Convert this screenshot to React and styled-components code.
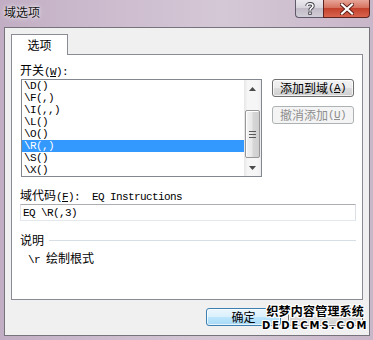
import React from "react";
import styled, { createGlobalStyle } from "styled-components";

const CJK = `"Noto Sans CJK SC", "Noto Sans", sans-serif`;
const MONO = `"Liberation Mono", "Noto Sans CJK SC", monospace`;

const Global = createGlobalStyle`
  html, body { margin: 0; padding: 0; background: #c9b8ca; }
  * { box-sizing: border-box; }
`;

const Frame = styled.div`
  position: relative;
  width: 373px;
  height: 340px;
  background: linear-gradient(90deg, #c2aec4 0%, #cbbacd 25%, #d5c8d6 60%, #cdbdce 85%, #c8b6c9 100%);
  display: flex;
  flex-direction: column;
  font-family: ${CJK};
  font-size: 12px;
  color: #000;
  overflow: hidden;
`;

const TitleBar = styled.div`
  height: 27px;
  display: flex;
  align-items: flex-start;
  padding: 0 3px 0 4px;
`;

const Title = styled.div`
  margin-top: 4px;
  font-size: 12px;
  line-height: 16px;
  color: #111;
  text-shadow: 0 0 5px rgba(255, 255, 255, 0.9), 0 0 2px rgba(255, 255, 255, 0.8);
`;

const Caption = styled.div`
  margin-left: auto;
  display: flex;
`;

const HelpBtn = styled.div`
  width: 28px;
  height: 18px;
  border: 1px solid #5f5868;
  border-top: none;
  border-right: none;
  border-radius: 0 0 0 4px;
  background: linear-gradient(#ece9ef, #d9d5dd 45%, #c0bbc6 50%, #d2ced7);
  display: flex;
  align-items: center;
  justify-content: center;
`;

const CloseBtn = styled.div`
  width: 47px;
  height: 18px;
  border: 1px solid #5e2520;
  border-top: none;
  border-radius: 0 0 4px 0;
  background: linear-gradient(#e6a598, #d77260 45%, #c4412d 50%, #d8654f);
  display: flex;
  align-items: center;
  justify-content: center;
`;

const Client = styled.div`
  margin: 0 3px 0 4px;
  height: 309px;
  background: #f0f0f0;
  border: 1px solid #77737c;
  padding: 6px 6px 0 6px;
  display: flex;
  flex-direction: column;
`;

const TabStrip = styled.div`
  display: flex;
  position: relative;
  z-index: 1;
  margin-bottom: -1px;
`;

const Tab = styled.div`
  width: 57px;
  height: 21px;
  background: #fff;
  border: 1px solid #898c95;
  border-bottom: none;
  display: flex;
  align-items: center;
  justify-content: center;
  padding-bottom: 2px;
`;

const Panel = styled.div`
  height: 246px;
  background: #fff;
  border: 1px solid #898c95;
  padding: 8px 6px 0 8px;
  display: flex;
  flex-direction: column;
`;

const Label = styled.div`
  line-height: 14px;
  height: 14px;
  white-space: pre;
  margin-top: ${(p) => p.$mt || 0}px;
  padding-left: ${(p) => p.$indent || 0}px;
`;

const Mono = styled.span`
  font-family: ${MONO};
  font-size: 11px;
  letter-spacing: -0.6px;
`;

const Row = styled.div`
  display: flex;
  margin-top: 2px;
  gap: 10px;
`;

const ListBox = styled.div`
  margin-left: 1px;
  width: 241px;
  height: 98px;
  border: 1px solid #828790;
  display: flex;
  background: #fff;
`;

const Items = styled.div`
  flex: 1;
  display: flex;
  flex-direction: column;
`;

const Item = styled.div`
  height: 12px;
  line-height: 12px;
  padding-left: 2px;
  font-family: ${MONO};
  font-size: 11px;
  letter-spacing: -0.6px;
  white-space: pre;
  background: ${(p) => (p.$selected ? "#3399ff" : "transparent")};
  color: ${(p) => (p.$selected ? "#fff" : "#000")};
`;

const ScrollBar = styled.div`
  width: 17px;
  display: flex;
  flex-direction: column;
  background: linear-gradient(90deg, #e6e6e6, #f6f6f6 20%, #f6f6f6 80%, #ececec);
`;

const Arrow = styled.div`
  height: 17px;
  display: flex;
  align-items: center;
  justify-content: center;
`;

const Track = styled.div`
  flex: 1;
  padding-top: 13px;
  display: flex;
  flex-direction: column;
`;

const Thumb = styled.div`
  height: 48px;
  margin: 0 1px;
  border: 1px solid #979797;
  border-radius: 2px;
  background: linear-gradient(90deg, #f4f4f4, #e8e8e8 45%, #d6d6d6 55%, #cfcfcf);
  box-shadow: inset 1px 1px 0 #fff;
  display: flex;
  align-items: center;
  justify-content: center;
`;

const Buttons = styled.div`
  display: flex;
  flex-direction: column;
  gap: 9px;
`;

const Button = styled.div`
  width: ${(p) => p.$w || 82}px;
  height: 18px;
  border: 1px solid ${(p) => (p.$disabled ? "#adb2b5" : p.$default ? "#3c7fb1" : "#707070")};
  border-radius: 3px;
  background: ${(p) =>
    p.$disabled
      ? "#f4f4f4"
      : p.$default
      ? "linear-gradient(#eaf6fd, #d9f0fc 50%, #bee6fd 50%, #a7d9f5)"
      : "linear-gradient(#f2f2f2, #ebebeb 50%, #dddddd 50%, #cfcfcf)"};
  box-shadow: ${(p) => (p.$disabled ? "none" : "inset 0 0 0 1px rgba(255,255,255,0.7)")};
  color: ${(p) => (p.$disabled ? "#8d8d8d" : "#000")};
  display: flex;
  align-items: center;
  justify-content: center;
  line-height: 14px;
  white-space: pre;
`;

const Input = styled.div`
  margin-top: 2px;
  width: 336px;
  height: 17px;
  border: 1px solid #abadb3;
  border-left-color: #e2e3ea;
  border-right-color: #dbdfe6;
  border-bottom-color: #e3e9ef;
  padding-left: 2px;
  display: flex;
  align-items: center;
`;

const GroupHead = styled.div`
  display: flex;
  align-items: center;
  gap: 5px;
  margin-top: 12px;
  width: 336px;
  line-height: 14px;
`;

const GroupLine = styled.div`
  flex: 1;
  height: 1px;
  background: #d5dfe5;
`;

const Footer = styled.div`
  display: flex;
  justify-content: flex-end;
  gap: 7px;
  margin-top: 8px;
`;

const Watermark = styled.div`
  position: absolute;
  left: 262px;
  top: 304px;
  display: flex;
  flex-direction: column;
  align-items: center;
  font-weight: bold;
  color: #000;
  text-shadow: -1px 0 #fff, 1px 0 #fff, 0 -1px #fff, 0 1px #fff, -1px -1px #fff, 1px 1px #fff,
    -1px 1px #fff, 1px -1px #fff;
`;

const WmCn = styled.div`
  font-size: 12px;
  line-height: 14px;
  letter-spacing: 0.2px;
`;

const WmEn = styled.div`
  font-family: "DejaVu Sans", sans-serif;
  font-size: 10px;
  line-height: 11px;
  letter-spacing: 2px;
  margin-top: 2px;
`;

const Ul = styled.u`
  text-underline-offset: 1px;
`;

const Acc = ({ k }) => (
  <Mono>
    (<Ul>{k}</Ul>)
  </Mono>
);

const items = ["\\D()", "\\F(,)", "\\I(,,)", "\\L()", "\\O()", "\\R(,)", "\\S()", "\\X()"];

export default function App() {
  return (
    <Frame>
      <Global />
      <TitleBar>
        <Title>域选项</Title>
        <Caption>
          <HelpBtn>
            <svg width="10" height="13" viewBox="0 0 10 13">
              <path d="M2 4 C2 1,8 1,8 4 C8 6,5 6,5 8.5" fill="none" stroke="#3c3c46" strokeWidth="3.4" />
              <rect x="3.3" y="9.6" width="3.4" height="3.2" fill="#3c3c46" />
              <path d="M2 4 C2 1,8 1,8 4 C8 6,5 6,5 8.5" fill="none" stroke="#fff" strokeWidth="1.6" />
              <rect x="4.2" y="10.4" width="1.6" height="1.6" fill="#fff" />
            </svg>
          </HelpBtn>
          <CloseBtn>
            <svg width="14" height="12" viewBox="0 0 14 12">
              <path d="M2 1.5 L12 10.5 M12 1.5 L2 10.5" stroke="#5a1d16" strokeWidth="4" strokeLinecap="square" />
              <path d="M2 1.5 L12 10.5 M12 1.5 L2 10.5" stroke="#fff" strokeWidth="2.2" strokeLinecap="square" />
            </svg>
          </CloseBtn>
        </Caption>
      </TitleBar>
      <Client>
        <TabStrip>
          <Tab>选项</Tab>
        </TabStrip>
        <Panel>
          <Label>
            开关<Acc k="W" />
            <Mono>:</Mono>
          </Label>
          <Row>
            <ListBox>
              <Items>
                {items.map((t) => (
                  <Item key={t} $selected={t === "\\R(,)"}>
                    {t}
                  </Item>
                ))}
              </Items>
              <ScrollBar>
                <Arrow>
                  <svg width="7" height="4" viewBox="0 0 7 4">
                    <path d="M0 4 L3.5 0 L7 4 Z" fill="#4a4a4a" />
                  </svg>
                </Arrow>
                <Track>
                  <Thumb>
                    <svg width="7" height="7" viewBox="0 0 7 7">
                      <path d="M0 0.5 H7 M0 3.5 H7 M0 6.5 H7" stroke="#5a5a5a" strokeWidth="1" />
                    </svg>
                  </Thumb>
                </Track>
                <Arrow>
                  <svg width="7" height="4" viewBox="0 0 7 4">
                    <path d="M0 0 L3.5 4 L7 0 Z" fill="#4a4a4a" />
                  </svg>
                </Arrow>
              </ScrollBar>
            </ListBox>
            <Buttons>
              <Button>
                添加到域<Acc k="A" />
              </Button>
              <Button $disabled>
                撤消添加<Acc k="U" />
              </Button>
            </Buttons>
          </Row>
          <Label $mt={11}>
            域代码<Acc k="F" />
            <Mono>:  EQ Instructions</Mono>
          </Label>
          <Input>
            <Mono>EQ \R(,3)</Mono>
          </Input>
          <GroupHead>
            <span>说明</span>
            <GroupLine />
          </GroupHead>
          <Label $mt={4} $indent={8}>
            <Mono>\r </Mono>绘制根式
          </Label>
        </Panel>
        <Footer>
          <Button $default $w={75}>
            确定
          </Button>
          <Button $w={75} />
        </Footer>
      </Client>
      <Watermark>
        <WmCn>织梦内容管理系统</WmCn>
        <WmEn>DEDECMS.COM</WmEn>
      </Watermark>
    </Frame>
  );
}
